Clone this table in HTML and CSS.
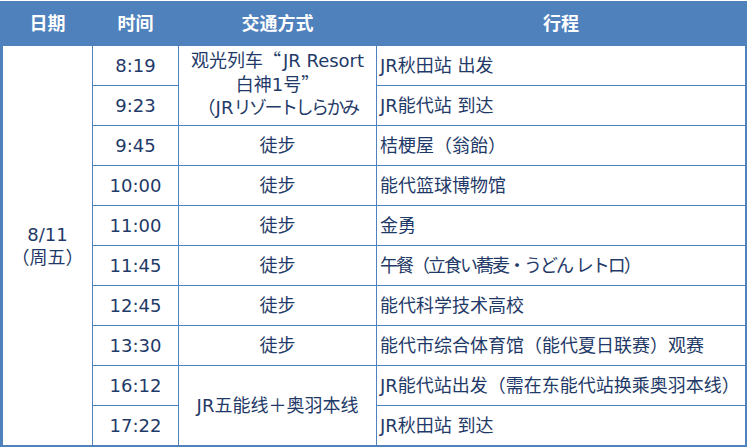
FILE: index.html
```html
<!DOCTYPE html>
<html lang="zh">
<head>
<meta charset="utf-8">
<title>行程表</title>
<link rel="stylesheet" href="styles.css">
</head>
<body>
<div class="sheet">
  <div class="grid">
    <div class="hd">日期</div>
    <div class="hd">时间</div>
    <div class="hd">交通方式</div>
    <div class="hd">行程</div>

    <div class="c date"><div>8/11<br>（周五）</div></div>

    <div class="c">8:19</div>
    <div class="c tr-multi"><div>观光列车<span class="q-open">“</span>JR Resort<br>白神1号<span class="q-close">”</span><br>（JR<span class="kana">リゾートしらかみ</span></div></div>
    <div class="c left">JR秋田站 出发</div>

    <div class="c">9:23</div>
    <div class="c left">JR能代站 到达</div>

    <div class="c">9:45</div>
    <div class="c">徒步</div>
    <div class="c left">桔梗屋（翁飴）</div>

    <div class="c">10:00</div>
    <div class="c">徒步</div>
    <div class="c left">能代篮球博物馆</div>

    <div class="c">11:00</div>
    <div class="c">徒步</div>
    <div class="c left">金勇</div>

    <div class="c">11:45</div>
    <div class="c">徒步</div>
    <div class="c left tight">午餐（立食い蕎麦・うどん レトロ）</div>

    <div class="c">12:45</div>
    <div class="c">徒步</div>
    <div class="c left">能代科学技术高校</div>

    <div class="c">13:30</div>
    <div class="c">徒步</div>
    <div class="c left">能代市综合体育馆（能代夏日联赛）观赛</div>

    <div class="c">16:12</div>
    <div class="c tr-last">JR五能线＋奥羽本线</div>
    <div class="c left">JR能代站出发（需在东能代站换乘奥羽本线）</div>

    <div class="c">17:22</div>
    <div class="c left">JR秋田站 到达</div>
  </div>
</div>
</body>
</html>
```
FILE: styles.css
```css
html, body {
  margin: 0;
  padding: 0;
  background: #ffffff;
}

body {
  font-family: "DejaVu Sans", "Noto Sans CJK SC", sans-serif;
  font-size: 18px;
  color: #1f3a68;
}

.sheet {
  padding-top: 1px;
  width: 747px;
}

.grid {
  display: grid;
  grid-template-columns: 89px 85px 197px 368px;
  grid-template-rows: 44px repeat(10, 39px);
  gap: 1px;
  background: #4f81bd;
  border-left: 3px solid #4f81bd;
  border-right: 2px solid #4f81bd;
  border-bottom: 4px solid #4f81bd;
}

.hd {
  background: #4f81bd;
  color: #ffffff;
  font-weight: bold;
  display: flex;
  align-items: center;
  justify-content: center;
  padding-bottom: 2px;
}

.c {
  background: #ffffff;
  display: flex;
  align-items: center;
  justify-content: center;
  text-align: center;
  white-space: nowrap;
  line-height: 23px;
}

.left {
  justify-content: flex-start;
  text-align: left;
  padding-left: 3px;
}

.tight {
  letter-spacing: -2px;
}

.date {
  grid-row: 2 / span 10;
  grid-column: 1;
}

.tr-multi {
  grid-row: 2 / span 2;
  grid-column: 3;
  padding-bottom: 4px;
  overflow: hidden;
}

.q-open,
.q-close {
  display: inline-block;
  width: 1em;
  font-family: "Noto Sans CJK SC", sans-serif;
}

.q-open {
  text-align: right;
  padding-right: 2px;
}

.q-close {
  text-align: left;
}

.kana {
  letter-spacing: -2.5px;
}

.tr-last {
  grid-row: 10 / span 2;
  grid-column: 3;
}
```
